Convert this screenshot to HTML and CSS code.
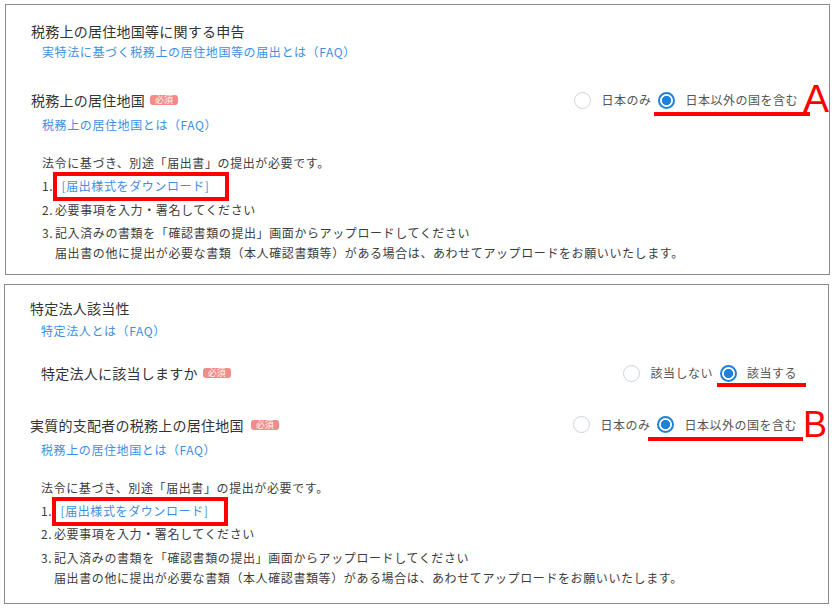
FILE: index.html
```html
<!DOCTYPE html>
<html lang="ja">
<head>
<meta charset="utf-8">
<title>税務上の居住地国等に関する申告</title>
<link rel="stylesheet" href="styles.css">
</head>
<body>
<section class="panel panel-a">
  <h2 class="title">税務上の居住地国等に関する申告</h2>
  <a class="link link-title">実特法に基づく税務上の居住地国等の届出とは（FAQ）</a>
  <div class="field-row row-a">
    <div class="field-label">税務上の居住地国<span class="badge">必須</span></div>
    <div class="radios">
      <label class="radio"><span class="dot"></span><span class="rlabel">日本のみ</span></label>
      <label class="radio"><span class="dot checked"></span><span class="rlabel">日本以外の国を含む</span></label>
    </div>
  </div>
  <a class="link link-field">税務上の居住地国とは（FAQ）</a>
  <div class="notice">
    <p class="lead">法令に基づき、別途「届出書」の提出が必要です。</p>
    <ol class="steps">
      <li class="step"><span class="num">1.</span><span class="txt"><a class="dl">[届出様式をダウンロード]</a></span></li>
      <li class="step"><span class="num">2.</span><span class="txt">必要事項を入力・署名してください</span></li>
      <li class="step"><span class="num">3.</span><span class="txt">記入済みの書類を「確認書類の提出」画面からアップロードしてください<br>届出書の他に提出が必要な書類（本人確認書類等）がある場合は、あわせてアップロードをお願いいたします。</span></li>
    </ol>
  </div>
  <span class="mark-line ml-a"></span>
  <span class="mark-letter letter-a">A</span>
</section>

<section class="panel panel-b">
  <h2 class="title">特定法人該当性</h2>
  <a class="link link-title-b">特定法人とは（FAQ）</a>
  <div class="field-row row-q">
    <div class="field-label">特定法人に該当しますか<span class="badge">必須</span></div>
    <div class="radios">
      <label class="radio"><span class="dot"></span><span class="rlabel">該当しない</span></label>
      <label class="radio"><span class="dot checked"></span><span class="rlabel">該当する</span></label>
    </div>
  </div>
  <div class="field-row row-b">
    <div class="field-label">実質的支配者の税務上の居住地国<span class="badge badge-wide">必須</span></div>
    <div class="radios">
      <label class="radio"><span class="dot"></span><span class="rlabel">日本のみ</span></label>
      <label class="radio"><span class="dot checked"></span><span class="rlabel">日本以外の国を含む</span></label>
    </div>
  </div>
  <a class="link link-field">税務上の居住地国とは（FAQ）</a>
  <div class="notice notice-b">
    <p class="lead">法令に基づき、別途「届出書」の提出が必要です。</p>
    <ol class="steps">
      <li class="step"><span class="num">1.</span><span class="txt"><a class="dl dl-b">[届出様式をダウンロード]</a></span></li>
      <li class="step"><span class="num">2.</span><span class="txt">必要事項を入力・署名してください</span></li>
      <li class="step"><span class="num">3.</span><span class="txt">記入済みの書類を「確認書類の提出」画面からアップロードしてください<br>届出書の他に提出が必要な書類（本人確認書類等）がある場合は、あわせてアップロードをお願いいたします。</span></li>
    </ol>
  </div>
  <span class="mark-line ml-b1"></span>
  <span class="mark-line ml-b2"></span>
  <span class="mark-letter letter-b">B</span>
</section>
</body>
</html>
```

FILE: styles.css
```css
html, body {
  margin: 0;
  padding: 0;
  background: #ffffff;
}

body {
  font-family: "Noto Sans CJK JP", "Noto Sans", sans-serif;
  color: #3c3c3c;
  font-size: 12px;
  line-height: 20px;
  letter-spacing: 0.6px;
}

.panel {
  position: relative;
  box-sizing: border-box;
  width: 825px;
  border: 1px solid #8a8a8a;
  padding: 0 31px 0 25px;
}

.panel-a {
  margin: 4px 0 0 5px;
  padding-top: 16px;
  padding-bottom: 10.5px;
}

.panel-b {
  margin: 9px 0 0 4px;
  padding-top: 13.5px;
  padding-bottom: 15px;
}

.title {
  margin: 0;
  font-size: 14px;
  font-weight: normal;
  line-height: 20px;
  letter-spacing: 0.25px;
  color: #333333;
}

.link {
  display: block;
  color: #3d8fe4;
  text-decoration: none;
  padding-left: 11px;
}

.link-title { margin-top: 1px; }
.link-title-b { margin-top: 2.5px; }
.link-field { margin-top: 5px; }

.field-row {
  display: flex;
  justify-content: space-between;
  align-items: center;
  height: 20px;
}

.row-a { margin-top: 28px; }
.row-q { margin-top: 22.5px; padding-left: 11px; }
.row-b { margin-top: 31.5px; }

.field-label {
  display: flex;
  align-items: center;
  font-size: 14px;
  letter-spacing: 0.25px;
  color: #333333;
}

.badge {
  display: inline-block;
  margin-left: 5px;
  padding: 0 5px;
  height: 10px;
  line-height: 10px;
  font-size: 9px;
  letter-spacing: 0;
  border-radius: 3px;
  background: #f38b8b;
  color: #fff4f4;
}

.badge-wide { margin-left: 7px; }

.radios {
  display: flex;
  align-items: center;
  gap: 7px;
}

.radio {
  display: flex;
  align-items: center;
  gap: 10px;
}

.dot {
  box-sizing: border-box;
  width: 17px;
  height: 17px;
  border-radius: 50%;
  border: 1.5px solid #ccd4df;
  background: #ffffff;
}

.dot.checked {
  border: 2px solid #1e82dc;
  background: radial-gradient(circle, #1e82dc 0 4.3px, #ffffff 5px);
}

.rlabel {
  color: #555555;
  font-size: 12px;
  letter-spacing: 0.5px;
}

.notice {
  padding-left: 11px;
  margin-top: 18px;
}

.lead {
  margin: 0;
}

.steps {
  list-style: none;
  margin: 0;
  padding: 0;
}

.step {
  display: flex;
  margin-top: 3.5px;
}

.step:first-child { margin-top: 3px; }

.num {
  flex: 0 0 13px;
}

.txt {
  flex: 1 1 auto;
}

.dl {
  position: relative;
  display: inline-block;
  margin-left: 6.5px;
  color: #3d8fe4;
  text-decoration: none;
}

.dl::after {
  content: "";
  position: absolute;
  left: -9px;
  right: -20px;
  top: -4.5px;
  bottom: -4.5px;
  border: 4px solid #ff0000;
}

.dl-b::after {
  top: -4px;
  bottom: -5px;
}

.mark-line {
  position: absolute;
  height: 4px;
  background: #ff0000;
}

.ml-a { left: 648px; top: 107px; width: 156px; }
.ml-b1 { left: 712px; top: 98px; width: 89px; }
.ml-b2 { left: 643px; top: 152px; width: 155px; }

.mark-letter {
  position: absolute;
  font-family: "Liberation Sans", Arial, sans-serif;
  color: #ff0000;
  letter-spacing: 0;
}

.letter-a {
  left: 797px;
  top: 74px;
  font-size: 39px;
  line-height: 39px;
}

.letter-b {
  left: 798px;
  top: 122.5px;
  font-size: 36px;
  line-height: 36px;
}
```
